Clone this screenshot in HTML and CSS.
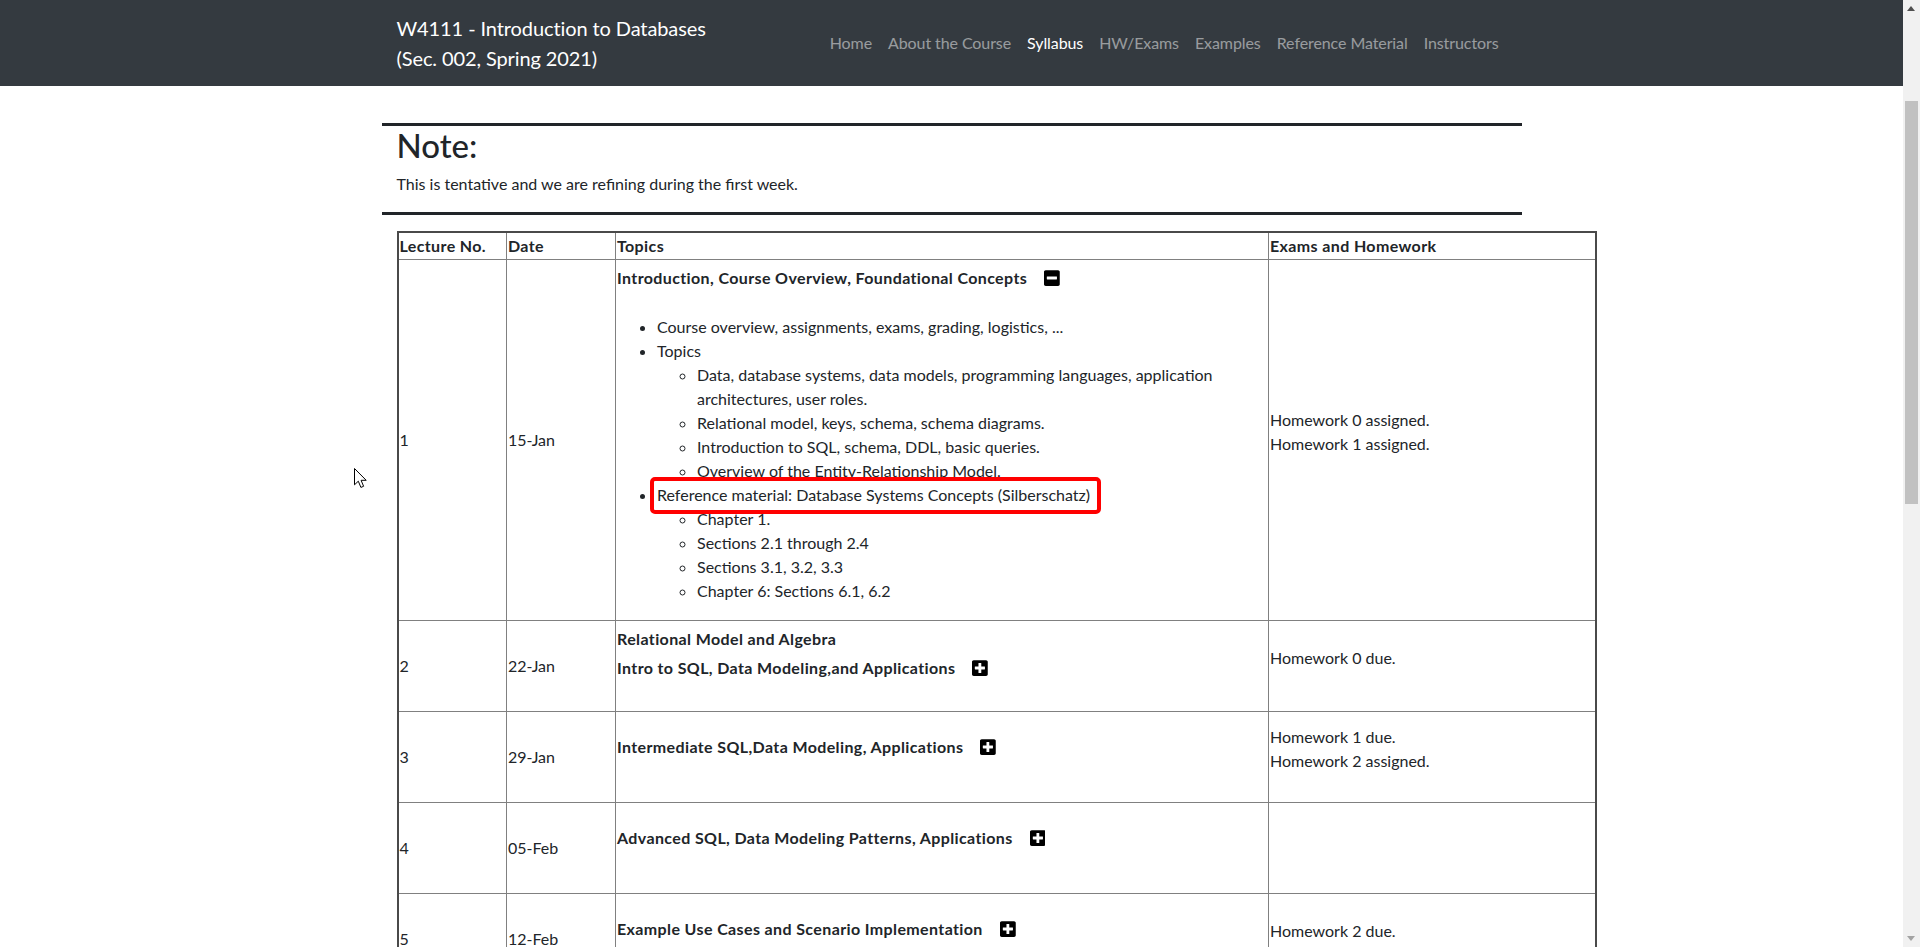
FILE: index.html
```html
<!DOCTYPE html>
<html lang="en">
<head>
<meta charset="utf-8">
<title>W4111 - Introduction to Databases - Syllabus</title>
<link rel="stylesheet" href="styles.css">
</head>
<body>
<nav class="navbar">
  <div class="nav-inner">
    <a class="brand" href="#">W4111 - Introduction to Databases<br>(Sec. 002, Spring 2021)</a>
    <ul class="nav-links">
      <li><a href="#">Home</a></li>
      <li><a href="#">About the Course</a></li>
      <li><a class="active" href="#">Syllabus</a></li>
      <li><a href="#">HW/Exams</a></li>
      <li><a href="#">Examples</a></li>
      <li><a href="#">Reference Material</a></li>
      <li><a href="#">Instructors</a></li>
    </ul>
  </div>
</nav>

<main class="page">
  <hr class="rule">
  <section class="note">
    <h2 class="note-title">Note:</h2>
    <p class="note-text">This is tentative and we are refining during the first week.</p>
  </section>
  <hr class="rule">

  <div class="table-wrap">
    <table class="syllabus">
      <colgroup>
        <col class="c-no"><col class="c-date"><col class="c-topic"><col class="c-hw">
      </colgroup>
      <thead>
        <tr><th>Lecture No.</th><th>Date</th><th>Topics</th><th>Exams and Homework</th></tr>
      </thead>
      <tbody>
        <tr>
          <td>1</td>
          <td>15-Jan</td>
          <td>
            <p class="topic-head">Introduction, Course Overview, Foundational Concepts
              <span class="toggle"><svg class="ico" viewBox="0 0 448 512"><path d="M400 32H48C21.5 32 0 53.5 0 80v352c0 26.5 21.5 48 48 48h352c26.5 0 48-21.5 48-48V80c0-26.5-21.5-48-48-48zM92 296c-6.6 0-12-5.4-12-12v-56c0-6.6 5.4-12 12-12h264c6.6 0 12 5.4 12 12v56c0 6.6-5.4 12-12 12H92z"/></svg></span>
            </p>
            <ul class="topic-list">
              <li>Course overview, assignments, exams, grading, logistics, ...</li>
              <li>Topics
                <ul>
                  <li>Data, database systems, data models, programming languages, application architectures, user roles.</li>
                  <li>Relational model, keys, schema, schema diagrams.</li>
                  <li>Introduction to SQL, schema, DDL, basic queries.</li>
                  <li>Overview of the Entity-Relationship Model.</li>
                </ul>
              </li>
              <li><span class="highlight">Reference material: Database Systems Concepts (Silberschatz)</span>
                <ul>
                  <li>Chapter 1.</li>
                  <li>Sections 2.1 through 2.4</li>
                  <li>Sections 3.1, 3.2, 3.3</li>
                  <li>Chapter 6: Sections 6.1, 6.2</li>
                </ul>
              </li>
            </ul>
          </td>
          <td><p class="hw">Homework 0 assigned.<br>Homework 1 assigned.</p></td>
        </tr>
        <tr class="lecture">
          <td>2</td>
          <td>22-Jan</td>
          <td>
            <div class="topic-line">Relational Model and Algebra</div>
            <p class="topic-head">Intro to SQL, Data Modeling,and Applications
              <span class="toggle"><svg class="ico" viewBox="0 0 448 512"><path d="M400 32H48C21.5 32 0 53.5 0 80v352c0 26.5 21.5 48 48 48h352c26.5 0 48-21.5 48-48V80c0-26.5-21.5-48-48-48zm-32 252c0 6.6-5.4 12-12 12h-92v92c0 6.6-5.4 12-12 12h-56c-6.6 0-12-5.4-12-12v-92H92c-6.6 0-12-5.4-12-12v-56c0-6.6 5.4-12 12-12h92v-92c0-6.6 5.4-12 12-12h56c6.6 0 12 5.4 12 12v92h92c6.6 0 12 5.4 12 12v56z"/></svg></span>
            </p>
          </td>
          <td><p class="hw">Homework 0 due.</p></td>
        </tr>
        <tr class="lecture">
          <td>3</td>
          <td>29-Jan</td>
          <td>
            <p class="topic-head">Intermediate SQL,Data Modeling, Applications
              <span class="toggle"><svg class="ico" viewBox="0 0 448 512"><path d="M400 32H48C21.5 32 0 53.5 0 80v352c0 26.5 21.5 48 48 48h352c26.5 0 48-21.5 48-48V80c0-26.5-21.5-48-48-48zm-32 252c0 6.6-5.4 12-12 12h-92v92c0 6.6-5.4 12-12 12h-56c-6.6 0-12-5.4-12-12v-92H92c-6.6 0-12-5.4-12-12v-56c0-6.6 5.4-12 12-12h92v-92c0-6.6 5.4-12 12-12h56c6.6 0 12 5.4 12 12v92h92c6.6 0 12 5.4 12 12v56z"/></svg></span>
            </p>
          </td>
          <td><p class="hw">Homework 1 due.<br>Homework 2 assigned.</p></td>
        </tr>
        <tr class="lecture">
          <td>4</td>
          <td>05-Feb</td>
          <td>
            <p class="topic-head">Advanced SQL, Data Modeling Patterns, Applications
              <span class="toggle"><svg class="ico" viewBox="0 0 448 512"><path d="M400 32H48C21.5 32 0 53.5 0 80v352c0 26.5 21.5 48 48 48h352c26.5 0 48-21.5 48-48V80c0-26.5-21.5-48-48-48zm-32 252c0 6.6-5.4 12-12 12h-92v92c0 6.6-5.4 12-12 12h-56c-6.6 0-12-5.4-12-12v-92H92c-6.6 0-12-5.4-12-12v-56c0-6.6 5.4-12 12-12h92v-92c0-6.6 5.4-12 12-12h56c6.6 0 12 5.4 12 12v92h92c6.6 0 12 5.4 12 12v56z"/></svg></span>
            </p>
          </td>
          <td></td>
        </tr>
        <tr class="lecture">
          <td>5</td>
          <td>12-Feb</td>
          <td>
            <p class="topic-head">Example Use Cases and Scenario Implementation
              <span class="toggle"><svg class="ico" viewBox="0 0 448 512"><path d="M400 32H48C21.5 32 0 53.5 0 80v352c0 26.5 21.5 48 48 48h352c26.5 0 48-21.5 48-48V80c0-26.5-21.5-48-48-48zm-32 252c0 6.6-5.4 12-12 12h-92v92c0 6.6-5.4 12-12 12h-56c-6.6 0-12-5.4-12-12v-92H92c-6.6 0-12-5.4-12-12v-56c0-6.6 5.4-12 12-12h92v-92c0-6.6 5.4-12 12-12h56c6.6 0 12 5.4 12 12v92h92c6.6 0 12 5.4 12 12v56z"/></svg></span>
            </p>
          </td>
          <td><p class="hw">Homework 2 due.</p></td>
        </tr>
        <tr class="lecture">
          <td>6</td>
          <td>19-Feb</td>
          <td><p class="topic-head">Entity-Relationship Model, Normalization</p></td>
          <td><p class="hw">Homework 3 assigned.</p></td>
        </tr>
        <tr class="lecture">
          <td>7</td>
          <td>26-Feb</td>
          <td><p class="topic-head">Midterm Review</p></td>
          <td><p class="hw">Homework 3 due.</p></td>
        </tr>
        <tr class="lecture">
          <td>8</td>
          <td>05-Mar</td>
          <td><p class="topic-head">Storage, Files and Indexes</p></td>
          <td><p class="hw">Midterm exam.</p></td>
        </tr>
        <tr class="lecture">
          <td>9</td>
          <td>12-Mar</td>
          <td><p class="topic-head">Query Processing and Optimization</p></td>
          <td><p class="hw">Homework 4 assigned.</p></td>
        </tr>
        <tr class="lecture">
          <td>10</td>
          <td>19-Mar</td>
          <td><p class="topic-head">Transactions, Concurrency Control, Recovery</p></td>
          <td></td>
        </tr>
        <tr class="lecture">
          <td>11</td>
          <td>26-Mar</td>
          <td><p class="topic-head">NoSQL Databases</p></td>
          <td><p class="hw">Homework 4 due.</p></td>
        </tr>
        <tr class="lecture">
          <td>12</td>
          <td>09-Apr</td>
          <td><p class="topic-head">Data Warehouses and Analytics</p></td>
          <td><p class="hw">Homework 5 assigned.</p></td>
        </tr>
        <tr class="lecture">
          <td>13</td>
          <td>23-Apr</td>
          <td><p class="topic-head">Final Review</p></td>
          <td><p class="hw">Homework 5 due.</p></td>
        </tr>
      </tbody>
    </table>
  </div>
</main>

<svg class="cursor" width="14" height="22" viewBox="0 0 14 22"><path d="M0.5 0.5 L0.5 16.8 L4.3 13.2 L6.9 19.4 L9.6 18.3 L7.1 12.3 L12.2 12.3 Z" fill="#fff" stroke="#000" stroke-width="1" stroke-linejoin="miter"/></svg>

<div class="scrollbar" aria-hidden="true">
  <span class="sb-arrow sb-up"></span>
  <span class="sb-thumb"></span>
  <span class="sb-arrow sb-down"></span>
</div>
</body>
</html>
```

FILE: styles.css
```css
body {
  margin: 0 17px 0 0;
  font-family: Lato, Roboto, sans-serif;
  font-size: 16px;
  line-height: 1.5;
  color: #212529;
  background: #fff;
  position: relative;
}

/* ---------- navbar ---------- */
.navbar {
  background: #343a40;
  padding: 8px 16px;
}
.nav-inner {
  width: 1140px;
  margin: 0 auto;
  padding: 0 15px;
  box-sizing: border-box;
  display: flex;
  align-items: center;
}
.brand {
  color: #fff;
  text-decoration: none;
  font-size: 20px;
  line-height: 30px;
  padding: 5px 0;
  letter-spacing: -0.1px;
}
.nav-links {
  list-style: none;
  margin: 0 0 0 auto;
  padding: 0;
  display: flex;
}
.nav-links a {
  display: block;
  padding: 8px;
  color: rgba(255, 255, 255, 0.5);
  text-decoration: none;
  letter-spacing: -0.09px;
}
.nav-links a.active {
  color: #fff;
}

/* ---------- page ---------- */
.page {
  width: 1140px;
  margin: 0 auto;
  padding-top: 37px;
}
.rule {
  margin: 0;
  border: 0;
  border-top: 3px solid #212529;
}
.note {
  padding: 0 15px;
}
.note-title {
  margin: 0 0 6px;
  font-size: 33px;
  font-weight: 500;
  line-height: 1.2;
}
.note-text {
  margin: 0 0 16px;
}

.table-wrap {
  padding: 16px 15px 40px;
}
.syllabus {
  width: 1198px;
  table-layout: fixed;
  border-collapse: collapse;
  border: 2px solid #4a4a4a;
}
.c-no { width: 109px; }
.c-date { width: 109px; }
.c-topic { width: 653px; }
.c-hw { width: 327px; }

.syllabus th,
.syllabus td {
  border: 1px solid #808080;
  padding: 1px;
  text-align: left;
  vertical-align: middle;
}
.syllabus th {
  font-weight: 700;
  letter-spacing: 0.38px;
}
.syllabus tr.lecture {
  height: 91px;
}

.topic-head {
  display: flex;
  align-items: center;
  box-sizing: border-box;
  min-height: 38px;
  padding-bottom: 3px;
  margin: 0 0 16px;
  font-weight: 700;
  letter-spacing: 0.38px;
}
.topic-line {
  font-weight: 700;
  letter-spacing: 0.38px;
}
.toggle {
  display: inline-flex;
  align-items: center;
  padding: 0 12px;
  margin-left: 5px;
}
.ico {
  width: 15.75px;
  height: 18px;
  fill: #000;
}

.topic-list {
  margin: 0 0 16px;
  padding-left: 40px;
}
.topic-list ul {
  margin: 0;
  padding-left: 40px;
  list-style: circle;
}

.hw {
  margin: 0 0 16px;
}

.highlight {
  position: relative;
  display: inline-block;
}
.highlight::after {
  content: "";
  position: absolute;
  left: -7px;
  right: -11px;
  top: -6px;
  bottom: -7px;
  border: 4px solid #f00;
  border-radius: 5px;
}

.cursor {
  position: absolute;
  left: 354px;
  top: 468px;
}

/* ---------- window scrollbar (drawn over the page edge) ---------- */
.scrollbar {
  position: fixed;
  top: 0;
  right: 0;
  width: 17px;
  height: 100vh;
  background: #f1f1f1;
}
.sb-thumb {
  position: absolute;
  top: 101px;
  left: 2px;
  right: 2px;
  height: 403px;
  background: #c1c1c1;
}
.sb-arrow {
  position: absolute;
  left: 4px;
  width: 0;
  height: 0;
  border-left: 4.5px solid transparent;
  border-right: 4.5px solid transparent;
}
.sb-up {
  top: 6px;
  border-bottom: 5px solid #505050;
}
.sb-down {
  bottom: 6px;
  border-top: 5px solid #a3a3a3;
}
```
